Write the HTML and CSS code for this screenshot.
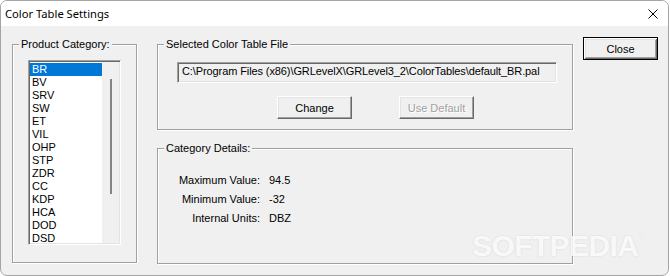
FILE: index.html
```html
<!DOCTYPE html>
<html lang="en">
<head>
  <meta charset="UTF-8">
  <title>Color Table Settings</title>
  <link rel="stylesheet" href="styles.css">
</head>
<body>
  <div class="window">
    <div class="titlebar">
      <span class="title">Color Table Settings</span>
      <svg class="title-close" width="10" height="10" viewBox="0 0 10 10">
        <path d="M0.5 0.5L9.5 9.5M9.5 0.5L0.5 9.5" stroke="#000" stroke-width="1"/>
      </svg>
    </div>

    <div class="client">
      <div class="group group-category">
        <div class="group-title">Product Category:</div>
        <div class="listbox">
          <ul class="list-items">
            <li class="selected">BR</li>
            <li>BV</li>
            <li>SRV</li>
            <li>SW</li>
            <li>ET</li>
            <li>VIL</li>
            <li>OHP</li>
            <li>STP</li>
            <li>ZDR</li>
            <li>CC</li>
            <li>KDP</li>
            <li>HCA</li>
            <li>DOD</li>
            <li>DSD</li>
          </ul>
          <div class="list-scroll"><div class="list-thumb"></div></div>
        </div>
      </div>

      <div class="middle">
        <div class="group group-file">
          <div class="group-title">Selected Color Table File</div>
          <div class="path-field">C:\Program Files (x86)\GRLevelX\GRLevel3_2\ColorTables\default_BR.pal</div>
          <div class="file-buttons">
            <button class="btn">Change</button>
            <button class="btn" disabled>Use Default</button>
          </div>
        </div>

        <div class="group group-details">
          <div class="group-title">Category Details:</div>
          <div class="details">
            <span class="detail-label">Maximum Value:</span>
            <span class="detail-value">94.5</span>
            <span class="detail-label">Minimum Value:</span>
            <span class="detail-value">-32</span>
            <span class="detail-label">Internal Units:</span>
            <span class="detail-value">DBZ</span>
          </div>
        </div>
      </div>

      <div class="side">
        <button class="btn btn-default">Close</button>
      </div>
    </div>

    <div class="watermark">SOFTPEDIA<span class="watermark-mark">®</span></div>
  </div>
</body>
</html>
```

FILE: styles.css
```css
* {
  margin: 0;
  padding: 0;
  box-sizing: border-box;
}

body {
  background-color: #FFFFFF;
  font-family: "Liberation Sans", Arial, sans-serif;
  font-size: 11px;
  color: #000000;
}

.window {
  position: relative;
  width: 669px;
  height: 276px;
  background-color: #F0F0F0;
  border: 1px solid #A5A5A5;
  border-radius: 7px;
  overflow: hidden;
}

/* Title bar */
.titlebar {
  height: 25px;
  background-color: #FFFFFF;
  display: flex;
  align-items: center;
  justify-content: space-between;
  padding: 0 10px 0 4px;
}

.title {
  font-family: "Noto Sans", "Liberation Sans", sans-serif;
  font-size: 11.2px;
  color: #000000;
}

.title-close {
  display: block;
}

/* Dialog body */
.client {
  display: flex;
  align-items: flex-start;
  padding: 11px 0 0 11px;
}

.group {
  margin-top: 7px;
  border: 1px solid #A0A0A0;
  box-shadow: 1px 1px 0 #FFFFFF, inset 1px 1px 0 #FFFFFF;
}

.group + .group {
  margin-top: 18px;
}

.group-title {
  width: max-content;
  margin: -7px 0 0 6px;
  padding: 0 2px;
  line-height: 13px;
  background-color: #F0F0F0;
}

.group-category {
  width: 125px;
  height: 219px;
}

.middle {
  width: 416px;
  margin-left: 20px;
}

.side {
  margin-left: 10px;
}

/* List box */
.listbox {
  display: flex;
  width: 93px;
  height: 185px;
  margin: 9px 0 0 15px;
  background-color: #FFFFFF;
  border: 1px solid;
  border-color: #A0A0A0 #FFFFFF #FFFFFF #A0A0A0;
  box-shadow: inset 1px 1px 0 #696969, inset -1px -1px 0 #E3E3E3;
  padding: 1px;
  overflow: hidden;
}

.list-items {
  list-style: none;
  width: 72px;
  padding-top: 1px;
  overflow: hidden;
}

.list-items li {
  height: 13px;
  line-height: 13px;
  padding-left: 2px;
  white-space: nowrap;
}

.list-items li.selected {
  background-color: #0078D7;
  color: #FFFFFF;
}

.list-scroll {
  flex: 1;
  background-color: #F0F0F0;
  padding: 17px 0 0 8px;
}

.list-thumb {
  width: 2px;
  height: 115px;
  background-color: #858585;
}

/* Color table file */
.group-file {
  height: 86px;
}

.path-field {
  width: 380px;
  height: 21px;
  margin: 11px 0 0 19px;
  padding: 0 0 0 4px;
  line-height: 17px;
  letter-spacing: -0.1px;
  white-space: nowrap;
  overflow: hidden;
  border: 1px solid;
  border-color: #A0A0A0 #FFFFFF #FFFFFF #A0A0A0;
  box-shadow: inset 1px 1px 0 #696969, inset -1px -1px 0 #E3E3E3;
  background-color: #F0F0F0;
}

.file-buttons {
  display: flex;
  gap: 47px;
  margin: 13px 0 0 119px;
}

/* Buttons */
.btn {
  width: 75px;
  height: 23px;
  font-family: "Liberation Sans", Arial, sans-serif;
  font-size: 11px;
  color: #000000;
  background-color: #F0F0F0;
  border: 1px solid;
  border-color: #FFFFFF #696969 #696969 #FFFFFF;
  box-shadow: inset -1px -1px 0 #A0A0A0, inset 1px 1px 0 #E3E3E3;
}

.btn:disabled {
  color: #A0A0A0;
  text-shadow: 1px 1px 0 #FFFFFF;
}

.btn-default {
  border-color: #000000;
  box-shadow: inset 1px 1px 0 #FFFFFF, inset -1px -1px 0 #696969,
              inset 2px 2px 0 #E3E3E3, inset -2px -2px 0 #A0A0A0;
}

/* Category details */
.group-details {
  height: 116px;
}

.details {
  display: grid;
  grid-template-columns: 102px auto;
  column-gap: 9px;
  margin-top: 16px;
  line-height: 19px;
}

.detail-label {
  text-align: right;
}

/* Watermark */
.watermark {
  position: absolute;
  left: 471px;
  top: 221px;
  font-family: "Liberation Sans", Arial, sans-serif;
  font-weight: 700;
  font-size: 30px;
  line-height: 30px;
  letter-spacing: -0.6px;
  color: rgba(255, 255, 255, 0.85);
  text-shadow: 0 0 2px rgba(0, 0, 0, 0.12);
  pointer-events: none;
}

.watermark-mark {
  font-size: 9px;
  vertical-align: 16px;
  font-weight: 400;
  margin-left: 1px;
}
```
